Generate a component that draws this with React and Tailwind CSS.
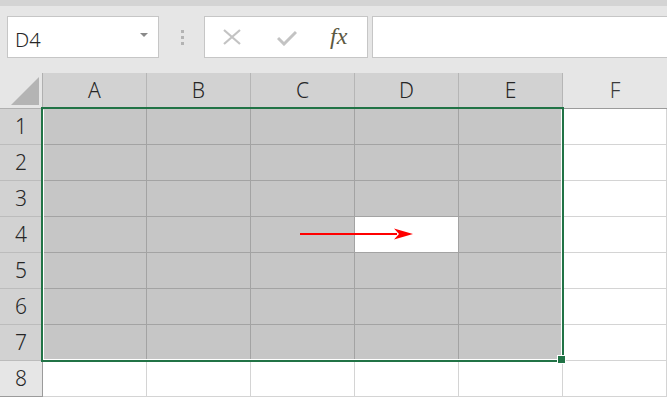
import React from "react";

const cols = ["A", "B", "C", "D", "E", "F"];
const rows = [1, 2, 3, 4, 5, 6, 7, 8];

export default function App() {
  return (
    <div
      className="w-[667px] h-[397px] overflow-hidden bg-[#e6e6e6] text-[#262626] font-light"
      style={{ fontFamily: '"Noto Sans", "Liberation Sans", sans-serif' }}
    >
      {/* top strip */}
      <div className="h-[6px] bg-[#d4d4d4]" />
      {/* formula toolbar */}
      <div className="h-[67px] pt-[10px] flex items-start">
        <div className="ml-[7px] w-[152px] h-[42px] bg-white border border-[#c6c6c6] flex items-center justify-between pl-[7px] pr-[10px]">
          <span className="text-[20px] leading-none pt-[5px]">D4</span>
          <svg width="8" height="5" viewBox="0 0 8 5" className="mb-[3px]">
            <path d="M0 0 L8 0 L4 4 Z" fill="#8a8a8a" />
          </svg>
        </div>
        <div className="w-[45px] h-[42px] flex flex-col items-center justify-center gap-[3px] pl-[2px]">
          <span className="w-[3px] h-[3px] bg-[#b3b3b3]" />
          <span className="w-[3px] h-[3px] bg-[#b3b3b3]" />
          <span className="w-[3px] h-[3px] bg-[#b3b3b3]" />
        </div>
        <div className="w-[164px] h-[42px] bg-white border border-[#c6c6c6] flex items-center">
          <svg width="18" height="16" viewBox="0 0 18 16" className="ml-[18px]">
            <path d="M1 1 L17 15 M17 1 L1 15" stroke="#c3c3c3" strokeWidth="2.2" fill="none" />
          </svg>
          <svg width="20" height="16" viewBox="0 0 20 16" className="ml-[36px] mt-[1px]">
            <path d="M1 8 L7 14 L19 2" stroke="#c3c3c3" strokeWidth="3" fill="none" />
          </svg>
          <span
            className="ml-[33px] text-[24px] italic font-normal leading-none text-[#5c5842] -mt-[2px]"
            style={{ fontFamily: '"Liberation Serif", "DejaVu Serif", serif' }}
          >
            fx
          </span>
        </div>
        <div className="ml-[4px] flex-1 h-[42px] bg-white border-y border-l border-[#c6c6c6]" />
      </div>

      {/* sheet grid */}
      <div className="relative">
        <div className="grid grid-cols-[43px_104px_104px_104px_104px_104px_1fr] auto-rows-[36px]">
          {/* corner */}
          <div className="relative bg-[#e6e6e6] border-r border-b border-[#b0b0b0]">
            <svg width="28" height="28" viewBox="0 0 28 28" className="absolute left-[11px] top-[4px]">
              <path d="M28 0 L28 28 L0 28 Z" fill="#b4b4b4" />
            </svg>
          </div>
          {cols.map((c) => (
            <div
              key={c}
              className={
                c === "F"
                  ? "bg-[#e6e6e6] border-b border-[#9b9b9b] flex items-center justify-center text-[21px] text-[#3a3a3a]"
                  : "bg-[#d2d2d2] border-r border-b border-[#b6b6b6] flex items-center justify-center text-[21px]"
              }
            >
              {c}
            </div>
          ))}
          {rows.map((r) => (
            <React.Fragment key={r}>
              <div
                className={
                  r === 8
                    ? "bg-[#e6e6e6] border-r border-b border-[#9b9b9b] flex items-center justify-center text-[21px]"
                    : "bg-[#d2d2d2] border-r border-b border-[#bcbcbc] flex items-center justify-center text-[21px]"
                }
              >
                {r}
              </div>
              {cols.map((c) => {
                const inSel = r <= 7 && c !== "F";
                const active = r === 4 && c === "D";
                let cls;
                if (active) cls = "bg-white border-r border-b border-[#a3a3a3]";
                else if (inSel) cls = "bg-[#c6c6c6] border-r border-b border-[#a3a3a3]";
                else cls = "bg-white border-r border-b border-[#d4d4d4]";
                return <div key={c} className={cls} />;
              })}
            </React.Fragment>
          ))}
        </div>

        {/* selection border */}
        <div className="absolute left-[41px] top-[34px] w-[523px] h-[255px] border-2 border-[#217346] pointer-events-none">
          <div className="w-full h-full border border-white" style={{ borderTopColor: "transparent" }} />
        </div>
        {/* fill handle */}
        <div className="absolute left-[557px] top-[282px] w-[9px] h-[9px] bg-[#217346] border border-white" />

        {/* red arrow */}
        <svg
          width="114"
          height="13"
          viewBox="0 0 114 13"
          className="absolute left-[300px] top-[155px]"
        >
          <path d="M0 6 L97 6" stroke="#ff0000" strokeWidth="2" />
          <path d="M113 6 L94 0.5 L99 6 L94 11.5 Z" fill="#ff0000" />
        </svg>
      </div>
    </div>
  );
}
